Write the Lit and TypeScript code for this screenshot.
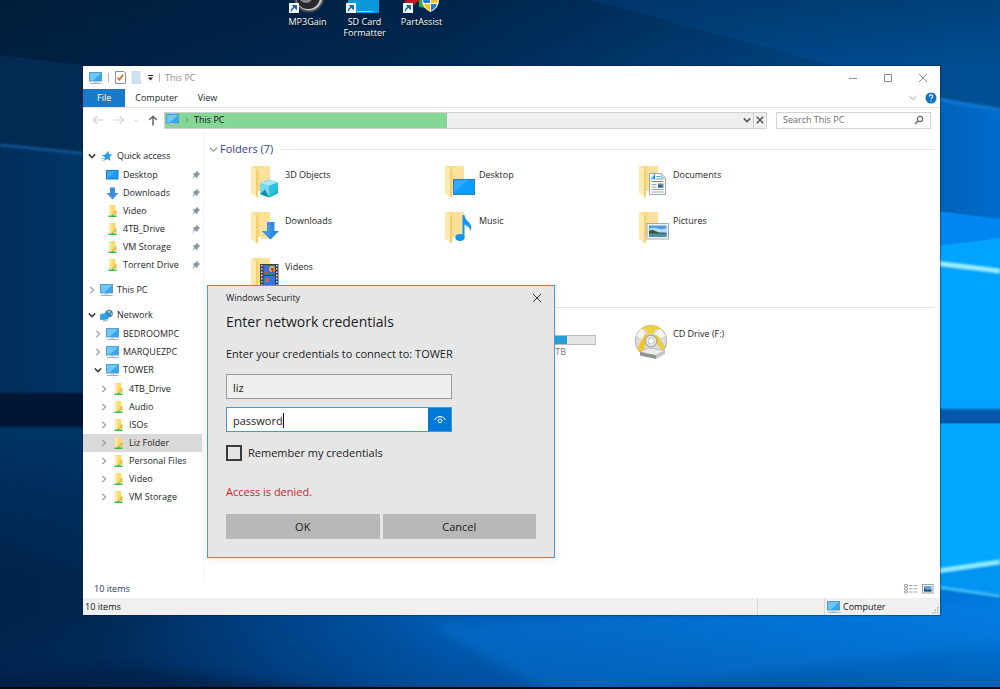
import { LitElement, html, svg, css, nothing, TemplateResult } from "lit";
import { customElement, state } from "lit/decorators.js";
import { classMap } from "lit/directives/class-map.js";
import { styleMap } from "lit/directives/style-map.js";

const base = css`
  * { box-sizing: border-box; }
  button, input {
    font: inherit;
    color: inherit;
    margin: 0;
    padding: 0;
    border: 0;
    border-radius: 0;
    background: none;
    outline: none;
  }
  a { color: inherit; text-decoration: none; }
  ul { list-style: none; margin: 0; padding: 0; }
  h1, h2, p { margin: 0; font-weight: 400; }
  svg { display: block; flex: none; }
`;

/* ---------- small glyphs ---------- */

const pc = html`<svg width="14" height="14" viewBox="0 0 14 14" aria-hidden="true">
  <rect x=".5" y="1.5" width="12" height="8.500" fill="#35a7ee" stroke="#5b9cc6" />
  <path d="M1 2h11L4 9.500H1z" fill="#6cc8fb" />
  <path d="M4.500 10.500h4v1.200h-4z" fill="#b9c6d0" />
  <path d="M1 12.500h11.500" stroke="#9fb2c0" stroke-width="1" />
</svg>`;

const star = html`<svg width="12" height="12" viewBox="0 0 12 12" aria-hidden="true">
  <path d="M7 .8 8 4.200l3.500.3-2.800 2.300.7 3.900-3.100-1.700-3.200 1.800.7-3.700L.6 5.300l3.900-.8z" fill="#2b9ae8" />
  <path d="M0 8.500h3M1 10.300h2" stroke="#7cc0f2" stroke-width=".8" />
</svg>`;

const desktopSmall = html`<svg width="13" height="12" viewBox="0 0 13 12" aria-hidden="true">
  <rect x=".5" y="1.500" width="11.500" height="8.500" fill="#1a9cf8" stroke="#1479c8" />
  <path d="M1 2h8L2 9.500H1z" fill="#38acfb" />
</svg>`;

const downSmall = html`<svg width="13" height="13" viewBox="0 0 13 13" aria-hidden="true">
  <path d="M4 .5h5V6h3.500L6.500 12.500.5 6H4z" fill="#3b8ede" />
</svg>`;

const netFolder = html`<svg width="13" height="14" viewBox="0 0 13 14" aria-hidden="true">
  <path d="M3 1h6.500v9.500H3z" fill="#fbd96b" />
  <path d="M3 1l2.500 1v9.500L3 10.500z" fill="#ffe99c" />
  <path d="M9.500 6h1v4.500H6z" fill="#e9bd45" />
  <path d="M6.500 10.500v2M2.500 12.300h8" stroke="#35bb3d" stroke-width="1.600" />
</svg>`;

const network = html`<svg width="13" height="13" viewBox="0 0 13 13" aria-hidden="true">
  <circle cx="9" cy="4.500" r="3.800" fill="#3e86a8" />
  <path d="M7 2.500q2-1.500 3.500 0l-1 2zM10 5l2-1v2.500z" fill="#9fd3dc" />
  <path d="M.5 5.500 8 4v6L.5 10.800z" fill="#2aa3ee" stroke="#2a83bd" stroke-width=".6" />
  <path d="M3 11.800h4.500" stroke="#8aa2b4" />
</svg>`;

const pin = html`<svg width="10" height="10" viewBox="0 0 10 10" aria-hidden="true">
  <path d="M5.500.8 9.200 4.300 8 4.800 6.700 6.200 6.300 8.300 4.200 6.500 1 9.200 3.300 5.600 1.500 3.700l2.200-.4L5.200 2z" fill="#8796a3" />
</svg>`;

const chevron = (dir: "right" | "down", color: string, size = 8, width = 1.2) => html`<svg
  width=${size} height=${size} viewBox="0 0 8 8" aria-hidden="true">
  <path d=${dir === "down" ? "M.8 2.400 4 5.600 7.200 2.400" : "M2.300.8 5.500 4 2.300 7.200"} fill="none"
    stroke=${color} stroke-width=${width} />
</svg>`;

const cross = (color: string, size: number, width = 1) => html`<svg
  width=${size} height=${size} viewBox="0 0 10 10" aria-hidden="true">
  <path d="M1 1 9 9M9 1 1 9" stroke=${color} stroke-width=${width} fill="none" />
</svg>`;

/* ---------- large folder icons ---------- */

const folderBody = svg`
  <path d="M7 1h17v27H9z" fill="#f8dc8c" />
  <path d="M14 1h10v27H14z" fill="#fbe19a" />
  <path d="M5 .5 12 5v27.500L5 28z" fill="#ffe9ac" />
  <path d="M10 4 12 5v27.500l-2-1.300z" fill="#f3cf72" />
  <path d="M12 26h3v4l-3 1.500z" fill="#fff" />`;

const overlays: Record<string, unknown> = {
  objects: svg`
    <path d="M14 18.500 23 14.500l9 3v11l-8.500 4L14 29z" fill="#1fb4cf" />
    <path d="M14 18.500 23 14.500l9 3-9 3.500z" fill="#a4e8f0" />
    <path d="M14 18.500 23 21v11.500L14 29z" fill="#7ad9e6" />
    <path d="M14 29 19 24.500l4 8z" fill="#0f8fa6" />
    <path d="M23 21 32 17.500v6L23 32z" fill="#2cc4dc" />`,
  desktop: svg`
    <rect x="13.500" y="14.500" width="21" height="15" fill="#0d9cff" stroke="#2b7fb6" />
    <path d="M14 15h14L14 28z" fill="#2aa9ff" />`,
  documents: svg`
    <path d="M15.500 8.500h12l4 4v17h-16z" fill="#fcfdff" stroke="#9aa7b3" />
    <path d="M27.500 8.500v4h4" fill="#dfe5ea" stroke="#9aa7b3" stroke-width=".8" />
    <path d="M17.500 14.500 20.500 10v4.500M18.500 13h2" fill="none" stroke="#2191dc" stroke-width="1.100" />
    <path d="M22.500 11.500h4M22.500 14h7M17.500 16.500h12" stroke="#3fa2df" />
    <path d="M17.500 19.500h5M17.500 22h5M17.500 24.500h12M17.500 27h12" stroke="#9aa4ad" />
    <rect x="24" y="18.500" width="5.500" height="4" fill="#5b8fb5" />
    <path d="M24 22.500v-1.500l2-1.200 3.500 2.700z" fill="#2e5f4c" />`,
  downloads: svg`<path d="M21 11h7.500v9H33L24.500 28.500 16 20h5z" fill="#2f8be0" />
    <path d="M21 11h3.500v17.500L16 20h5z" fill="#4197e6" />`,
  music: svg`
    <ellipse cx="20" cy="26.500" rx="4.600" ry="3.400" fill="#0d96f2" />
    <path d="M22.500 4h2q.5 4 4.500 7.500 3.500 3.500 1.500 9.500.2-5-6-7.500v13h-2z" fill="#0d96f2" />`,
  pictures: svg`
    <rect x="13" y="12.500" width="21.500" height="15.500" fill="#f1f4f6" stroke="#a2abb2" />
    <rect x="15" y="14.500" width="17.500" height="11.500" fill="#4f9be0" />
    <path d="M15 18q5-2 9-.5t8.500-.5v4.500H15z" fill="#b8dcf3" />
    <path d="M15 19.500 19 19l6 2.500 7.500.5v1.500H15z" fill="#34594a" />
    <path d="M15 22.500h17.500V26H15z" fill="#4f8d9f" />`,
  videos: svg`
    <rect x="14" y="7" width="18.500" height="24" fill="#3a3d44" />
    <rect x="17.500" y="8" width="11.500" height="10" fill="#3b6ed8" />
    <rect x="17.500" y="19" width="11.500" height="11" fill="#3c74dd" />
    <circle cx="26" cy="12" r="3" fill="#e8b721" />
    <path d="M24.500 11h3.500l-1.500 5z" fill="#c8312c" />
    <circle cx="20" cy="15.500" r="1.800" fill="#d94545" />
    <path d="M22 18q3-3 6 0z" fill="#3d8a3b" />
    <circle cx="21" cy="23" r="2" fill="#e2584c" />
    <path d="M15.700 8v23M30.800 8v23" stroke="#dcdfe4" stroke-width="1.500" stroke-dasharray="1.600 1.600" />`,
};

const largeFolder = (kind: string) => html`<svg width="38" height="34" viewBox="0 0 38 34" aria-hidden="true">
  ${folderBody}${overlays[kind]}
</svg>`;

const cdDrive = html`<svg width="38" height="36" viewBox="0 0 38 36" aria-hidden="true">
  <circle cx="17" cy="17" r="15.800" fill="#d9dad9" stroke="#a9a9a0" stroke-width=".8" />
  <path d="M6 6A15.400 15.400 0 0 1 28 6L17 3.500z" fill="#f6cc1c" />
  <path d="M11 3q6-2.500 12 0l-4 7h-5z" fill="#f3cf3a" />
  <path d="M2.500 12Q4 7 8 4.500L13 12l-3 4z" fill="#f2f2f0" />
  <path d="M26 5q4 3 5.500 7l-8 3-3-5z" fill="#f7f7f5" />
  <path d="M3 25 11 10l4 1-7 18q-3-1-5-4z" fill="#f1c828" />
  <path d="M20 10l4 2 7 11q-1 3-3 4l-6-9z" fill="#efca36" />
  <circle cx="17" cy="17" r="5.800" fill="#e6e6e6" stroke="#a8a8a8" stroke-width="1.200" />
  <circle cx="17" cy="17" r="3" fill="#fff" stroke="#b5b5b5" stroke-width=".8" />
  <path d="M6 28 14 24l17 2.500-9 5z" fill="#ececec" stroke="#9d9d9d" stroke-width=".5" />
  <path d="M6 28 22 31.500v3.500L6 31.500z" fill="#8f9193" />
  <path d="M22 31.500 31 26.500V30l-9 5z" fill="#c3c5c7" />
  <path d="M18 31.500h2v1.500h-2z" fill="#49c23e" />
</svg>`;

/* ---------- data ---------- */

interface TreeNode {
  label: string;
  icon: TemplateResult;
  open?: boolean;
  leaf?: boolean;
  pinned?: boolean;
  selected?: boolean;
  children?: TreeNode[];
}

const quick = (label: string, icon = netFolder): TreeNode => ({ label, icon, leaf: true, pinned: true });
const share = (label: string, selected = false): TreeNode => ({ label, icon: netFolder, selected });

const tree: TreeNode[] = [
  {
    label: "Quick access", icon: star, open: true,
    children: [
      quick("Desktop", desktopSmall), quick("Downloads", downSmall), quick("Video"),
      quick("4TB_Drive"), quick("VM Storage"), quick("Torrent Drive"),
    ],
  },
  { label: "This PC", icon: pc },
  {
    label: "Network", icon: network, open: true,
    children: [
      { label: "BEDROOMPC", icon: pc },
      { label: "MARQUEZPC", icon: pc },
      {
        label: "TOWER", icon: pc, open: true,
        children: [
          share("4TB_Drive"), share("Audio"), share("ISOs"), share("Liz Folder", true),
          share("Personal Files"), share("Video"), share("VM Storage"),
        ],
      },
    ],
  },
];

const folders: [string, string][] = [
  ["3D Objects", "objects"], ["Desktop", "desktop"], ["Documents", "documents"],
  ["Downloads", "downloads"], ["Music", "music"], ["Pictures", "pictures"],
  ["Videos", "videos"],
];

/* ---------- navigation tree ---------- */

@customElement("nav-tree")
class NavTree extends LitElement {
  static styles = [base, css`
    :host { display: block; padding-top: 15px; }
    .roots { display: flex; flex-direction: column; gap: 7px; }
    .branch { padding-top: 1px; }
    .row {
      width: 100%;
      height: 18px;
      display: flex;
      align-items: center;
      gap: 3px;
      text-align: left;
      white-space: nowrap;
    }
    .row.selected { background: #d9d9d9; }
    .d0 { padding-left: 5px; }
    .d1 { padding-left: 11px; }
    .d2 { padding-left: 17px; }
    .twist { width: 8px; flex: none; }
    .icon { width: 15px; flex: none; display: flex; justify-content: center; }
    .text { flex: 1; }
    .pin { margin-right: 1px; }
  `];

  private node(n: TreeNode, depth: number): TemplateResult {
    return html`<li>
      <button class=${classMap({ row: true, [`d${depth}`]: true, selected: !!n.selected })}>
        <span class="twist">${n.leaf ? nothing : chevron(n.open ? "down" : "right", n.open ? "#404040" : "#9a9a9a", 8, n.open ? 1.5 : 1.2)}</span>
        <span class="icon">${n.icon}</span>
        <span class="text">${n.label}</span>
        ${n.pinned ? html`<span class="pin">${pin}</span>` : nothing}
      </button>
      ${n.children ? html`<ul class="branch">${n.children.map((c) => this.node(c, depth + 1))}</ul>` : nothing}
    </li>`;
  }

  render() {
    return html`<ul class="roots">${tree.map((n) => this.node(n, 0))}</ul>`;
  }
}

/* ---------- explorer window ---------- */

@customElement("explorer-window")
class ExplorerWindow extends LitElement {
  @state() private progress = 47;
  @state() private driveUsed = 76;

  static styles = [base, css`
    :host {
      display: flex;
      flex-direction: column;
      background: #fff;
      color: #1e1e1e;
      font: 9px/12px "Open Sans", "Noto Sans", sans-serif;
    }
    .titlebar { display: flex; align-items: center; height: 23px; padding-left: 6px; flex: none; }
    .quick { display: flex; align-items: center; gap: 5px; flex: 1; color: #8f8f8f; }
    .bar { width: 1px; height: 9px; background: #b5b5b5; }
    .ctl { width: 35px; height: 22px; display: grid; place-items: center; }
    .menu {
      display: flex;
      align-items: stretch;
      height: 19px;
      flex: none;
      border-bottom: 1px solid #e2e3e4;
    }
    .menu a { padding: 0 10px; line-height: 18px; }
    .menu a.file { background: #1979ca; color: #fff; padding: 0 14px; }
    .menu .spacer { flex: 1; }
    .menu button { display: grid; place-items: center; padding: 0 4px; }
    .menu .help { padding: 0 3px 0 4px; }
    .navbar { display: flex; align-items: center; height: 24px; padding: 0 9px; flex: none; }
    .arrows { display: flex; align-items: center; width: 72px; gap: 9px; }
    .address {
      flex: 1;
      height: 17px;
      display: flex;
      align-items: center;
      position: relative;
      border: 1px solid #cfcfcf;
      background: #efefef;
      color: #111;
    }
    .fill { position: absolute; left: 0; top: 0; bottom: 0; background: #84d794; }
    .crumbs { position: relative; flex: 1; display: flex; align-items: center; gap: 4px; padding-left: 1px; }
    .address button { position: relative; height: 15px; width: 13px; display: grid; place-items: center; }
    .address .stop { border-left: 1px solid #cfcfcf; }
    .search {
      width: 155px;
      height: 17px;
      margin-left: 9px;
      display: flex;
      align-items: center;
      border: 1px solid #d4d4d4;
      padding: 0 6px;
    }
    .search input { flex: 1; min-width: 0; }
    .search input::placeholder { color: #6d6d6d; opacity: 1; }
    .search button { display: block; }
    .body { flex: 1; min-height: 0; display: flex; }
    nav-tree { width: 119px; flex: none; }
    .pane { flex: 1; min-width: 0; padding: 7px 5px 0 5px; border-left: 1px solid #f4f4f4; margin-left: 1px; }
    .group { display: flex; align-items: center; gap: 2px; height: 20px; color: #2f3f92; }
    .group h2 { font-size: 11px; line-height: 16px; }
    .rule { flex: 1; height: 1px; background: #e4e4e4; margin-left: 4px; }
    .grid {
      display: grid;
      grid-template-columns: repeat(auto-fill, 194px);
      grid-auto-rows: 46px;
      padding: 6px 0 0 37px;
    }
    .tile { display: flex; align-items: flex-start; gap: 1px; text-align: left; }
    .tile .name { padding-top: 4px; }
    .devices .rule { margin-left: 0; }
    .devices .grid { padding-top: 16px; }
    .drive { padding: 11px 0 0 39px; }
    .meter { width: 117px; height: 10px; border: 1px solid #bcbcbc; background: #e6e6e6; display: block; }
    .used { display: block; height: 100%; background: #26a0da; }
    .free { display: block; width: 87px; text-align: right; color: #7a7a7a; padding-top: 1px; }
    .devices { padding-top: 4px; }
    .summary { height: 18px; display: flex; align-items: center; padding: 0 6px 0 11px; color: #1e395b; flex: none; }
    .summary .views { margin-left: auto; display: flex; gap: 5px; }
    .status { height: 17px; display: flex; align-items: stretch; background: #f0f0f0; color: #111; line-height: 17px; flex: none; }
    .status .count { flex: 1; padding-left: 2px; }
    .status .cell { width: 67px; border-left: 1px solid #d9d9d9; }
    .status .zone { width: 116px; display: flex; align-items: center; gap: 2px; padding-left: 2px; }
    .zone .where { flex: 1; }
    .zone .grip { align-self: flex-end; }
  `];

  render() {
    return html`
      <div class="titlebar">
        <div class="quick">
          ${pc}<span class="bar"></span>
          <svg width="12" height="13" viewBox="0 0 12 13"><path d="M1.500.5h8.500l1.500 1.500v10.500h-10z" fill="#fff" stroke="#8e8e8e"/><path d="M3.500 6.500 5.500 9l3.500-5.500" fill="none" stroke="#e2632c" stroke-width="1.600"/></svg>
          <svg width="11" height="13" viewBox="0 0 11 13"><path d="M1 .5h8v10h1v2H1z" fill="#d3e0f2" stroke="#c0cfe6" stroke-width=".6"/></svg>
          <svg width="7" height="8" viewBox="0 0 7 8"><path d="M1 1.500h5" stroke="#222"/><path d="M1 3.500h5L3.500 6.500z" fill="#222"/></svg>
          <span class="bar"></span>
          <span>This PC</span>
        </div>
        <button class="ctl" aria-label="Minimize"><svg width="10" height="10" viewBox="0 0 10 10"><path d="M1 5.500h8" stroke="#8a8a8a"/></svg></button>
        <button class="ctl" aria-label="Maximize"><svg width="10" height="10" viewBox="0 0 10 10"><path d="M1.500 1.500h7v7h-7z" fill="none" stroke="#8a8a8a"/></svg></button>
        <button class="ctl" aria-label="Close">${cross("#8a8a8a", 10)}</button>
      </div>
      <div class="menu">
        <a class="file" href="#file">File</a>
        <a href="#computer">Computer</a>
        <a href="#view">View</a>
        <span class="spacer"></span>
        <button aria-label="Expand the ribbon">${chevron("down", "#9a9a9a", 8, 1)}</button>
        <button class="help" aria-label="Help">
          <svg width="12" height="12" viewBox="0 0 12 12"><circle cx="6" cy="6" r="5.500" fill="#0f70c8"/><path d="M4.200 4.600q0-1.700 1.800-1.700t1.800 1.500q0 .9-1 1.400-.8.500-.8 1.300M6 8.400v1.200" fill="none" stroke="#fff" stroke-width="1.100"/></svg>
        </button>
      </div>
      <div class="navbar">
        <div class="arrows">
          <button aria-label="Back"><svg width="12" height="10" viewBox="0 0 12 10"><path d="M11 5H1.500M5 1.500 1.500 5 5 8.500" fill="none" stroke="#cfcfcf" stroke-width="1.100"/></svg></button>
          <button aria-label="Forward"><svg width="12" height="10" viewBox="0 0 12 10"><path d="M1 5h9.500M7 1.500 10.500 5 7 8.500" fill="none" stroke="#cfcfcf" stroke-width="1.100"/></svg></button>
          <button aria-label="Recent locations">${chevron("down", "#cfcfcf", 5, 1.5)}</button>
          <button aria-label="Up"><svg width="10" height="11" viewBox="0 0 10 11"><path d="M5 10.500V1.500M1.200 5 5 1.300 8.800 5" fill="none" stroke="#666" stroke-width="1.500"/></svg></button>
        </div>
        <div class="address">
          <span class="fill" style=${styleMap({ width: `${this.progress}%` })}></span>
          <span class="crumbs">${pc}${chevron("right", "#5f7f66", 6)}<span>This PC</span></span>
          <button aria-label="Previous locations">${chevron("down", "#555", 8, 1.6)}</button>
          <button class="stop" aria-label="Stop loading">${cross("#555", 8, 1.9)}</button>
        </div>
        <div class="search">
          <input type="text" placeholder="Search This PC" aria-label="Search This PC" />
          <button aria-label="Search"><svg width="10" height="10" viewBox="0 0 10 10"><circle cx="6" cy="4" r="2.600" fill="none" stroke="#666" stroke-width="1.200"/><path d="M4.200 5.800 1 9" stroke="#666" stroke-width="1.500"/></svg></button>
        </div>
      </div>
      <div class="body">
        <nav-tree></nav-tree>
        <div class="pane">
          <div class="group">${chevron("down", "#8a8a8a", 9, 1)}<h2>Folders (7)</h2><span class="rule"></span></div>
          <div class="grid">
            ${folders.map(([name, kind]) => html`<button class="tile">${largeFolder(kind)}<span class="name">${name}</span></button>`)}
          </div>
          <div class="devices">
            <div class="rule"></div>
            <div class="grid">
              <span></span>
              <div class="drive">
                <span class="meter"><span class="used" style=${styleMap({ width: `${this.driveUsed}%` })}></span></span>
                <span class="free">TB</span>
              </div>
              <button class="tile">${cdDrive}<span class="name">CD Drive (F:)</span></button>
            </div>
          </div>
        </div>
      </div>
      <div class="summary">
        <span>10 items</span>
        <span class="views">
          <button aria-label="Details"><svg width="13" height="10" viewBox="0 0 13 10"><path d="M.5.5h3v2h-3zM.5 3.800h3v2h-3zM.5 7h3v2h-3z" fill="none" stroke="#9a8f94" stroke-width=".8"/><path d="M5 1.500h3.500M9.500 1.500H13M5 4.800h3.500M9.500 4.800H13M5 8h3.500M9.500 8H13" stroke="#a2a2a2"/></svg></button>
          <button aria-label="Large icons"><svg width="12" height="10" viewBox="0 0 12 10"><rect x=".5" y=".5" width="10.500" height="8.500" fill="#fff" stroke="#9aa3ab"/><rect x="2" y="2" width="7.500" height="5.500" fill="#5aa7e0"/><path d="M2 7.500V4.500l3 1.500 4.500-.5v2z" fill="#27465c"/></svg></button>
        </span>
      </div>
      <div class="status">
        <span class="count">10 items</span>
        <span class="cell"></span>
        <span class="cell zone">${pc}<span class="where">Computer</span>
          <svg class="grip" width="8" height="8" viewBox="0 0 8 8"><path d="M5 0h1.500v1.500H5zM2.500 2.500H4V4H2.500zM5 2.500h1.500V4H5zM0 5h1.500v1.500H0zM2.500 5H4v1.500H2.500zM5 5h1.500v1.500H5z" fill="#b4b4b4"/></svg>
        </span>
      </div>
    `;
  }
}

/* ---------- credentials dialog ---------- */

@customElement("credentials-dialog")
class CredentialsDialog extends LitElement {
  @state() private user = "liz";
  @state() private password = "password";

  static styles = [base, css`
    :host {
      display: block;
      background: #e6e6e6;
      border: 1px solid #4a9bdc;
      color: #1c1c1c;
      font: 11px/16px "Open Sans", "Noto Sans", sans-serif;
    }
    .head { display: flex; align-items: center; justify-content: space-between; height: 24px; padding: 0 11px 0 18px; }
    .head span { font-size: 9px; }
    .head button { display: grid; place-items: center; width: 12px; height: 12px; }
    form { padding: 0 18px 18px; }
    h1 { font-size: 14px; line-height: 24px; }
    .message { padding-top: 12px; }
    .field { width: 226px; height: 25px; display: flex; margin-top: 8px; position: relative; }
    .field input { flex: 1; min-width: 0; padding: 2px 6px 0; }
    .user { border: 1px solid #999; background: #efefef; margin-top: 12px; }
    .secret { border: 1px solid #3f98e0; background: #fff; }
    .secret input { caret-color: transparent; }
    .reveal { width: 23px; background: #0078d7; display: grid; place-items: center; }
    .caret { position: absolute; left: 56px; top: 5px; width: 1px; height: 15px; background: #111; }
    .remember { display: flex; align-items: center; gap: 6px; margin-top: 13px; height: 16px; }
    .remember input { appearance: none; width: 16px; height: 16px; border: 2px solid #3a3a3a; }
    .error { color: #d0222a; padding-top: 23px; }
    .actions { display: grid; grid-template-columns: 1fr 1fr; gap: 3px; padding-top: 14px; }
    .actions button { height: 25px; background: #b8b8b8; }
  `];

  render() {
    return html`
      <div class="head"><span>Windows Security</span><button aria-label="Close">${cross("#333", 10)}</button></div>
      <form @submit=${(e: Event) => e.preventDefault()}>
        <h1>Enter network credentials</h1>
        <p class="message">Enter your credentials to connect to: TOWER</p>
        <div class="field user"><input type="text" aria-label="User name" .value=${this.user} /></div>
        <div class="field secret">
          <input type="text" aria-label="Password" .value=${this.password} />
          <span class="caret"></span>
          <button type="button" class="reveal" aria-label="Reveal password">
            <svg width="14" height="12" viewBox="0 0 14 12"><path d="M1.500 6Q3 2.500 7 2.500T12.500 6" fill="none" stroke="#fff" stroke-width="1"/><circle cx="7" cy="6.800" r="1.900" fill="none" stroke="#fff" stroke-width="1"/></svg>
          </button>
        </div>
        <div class="remember">
          <input type="checkbox" id="remember" /><label for="remember">Remember my credentials</label>
        </div>
        <p class="error">Access is denied.</p>
        <div class="actions"><button type="submit">OK</button><button type="button">Cancel</button></div>
      </form>
    `;
  }
}

/* ---------- desktop ---------- */

const shortcut = svg`<rect x="0" y="3" width="10" height="10" fill="#f4f7fa" />
  <path d="M2 11.500q0-4 4-4.500M3.500 5.500h4v4z" fill="#1f62a8" stroke="#1f62a8" stroke-width="1" />`;

const shortcuts: [string, unknown][] = [
  ["MP3Gain", svg`
    <circle cx="20" cy="-3" r="15.500" fill="#46494d" />
    <circle cx="20" cy="-3" r="13.500" fill="#c4c5c6" />
    <circle cx="19" cy="-3" r="12" fill="#26282b" />
    <circle cx="17" cy="-4" r="7" fill="#85888c" />`],
  ["SD Card Formatter", svg`
    <path d="M2 0h31v13H2z" fill="#0a98dd" />
    <path d="M11 11.500h16" stroke="#d7ecf8" stroke-width=".7" />`],
  ["PartAssist", svg`
    <path d="M2 0h15l-6 5H2z" fill="#c01722" />
    <path d="M16 0h6v8l-6-1z" fill="#2ca84e" />
    <path d="M19 0h17q0 8-8.500 12Q19 8 19 0z" fill="#fff" />
    <path d="M20 0h7v3h-6q-1-1-1-3z" fill="#1f7bd0" />
    <path d="M28 0h7q0 2-1 3h-6z" fill="#f8c120" />
    <path d="M21 4h6v7q-5-3-6-7z" fill="#f8c120" />
    <path d="M28 4h6q-1 4-6 7z" fill="#1f7bd0" />`],
];

@customElement("app-root")
class AppRoot extends LitElement {
  static styles = [base, css`
    :host {
      display: block;
      position: relative;
      height: 100vh;
      overflow: hidden;
      background: #00254c;
      font: 9px/11px "Open Sans", "Noto Sans", sans-serif;
    }
    .wallpaper { position: absolute; inset: 0; width: 100%; height: 100%; }
    .shortcuts { position: relative; display: flex; padding-left: 279px; color: #fff; }
    .shortcut { width: 57px; display: flex; flex-direction: column; align-items: center; gap: 2px; text-align: center; text-shadow: 0 1px 2px #000; }
    .shortcut span { width: 48px; }
    explorer-window { position: absolute; left: 83px; right: 60px; top: 66px; bottom: 74px; box-shadow: 0 0 1px 1px rgba(0, 20, 50, 0.35); }
    credentials-dialog { position: absolute; left: 207px; top: 285px; width: 348px; box-shadow: 0 2px 8px rgba(0, 0, 0, 0.08); }
  `];

  render() {
    return html`
      <svg class="wallpaper" viewBox="0 0 1000 689" preserveAspectRatio="none" aria-hidden="true">
        <defs>
          <linearGradient id="top"><stop offset="0" stop-color="#001f3f"/><stop offset=".45" stop-color="#002a54"/><stop offset=".75" stop-color="#003e78"/><stop offset="1" stop-color="#004a8a"/></linearGradient>
          <linearGradient id="mid"><stop offset="0" stop-color="#002e5a"/><stop offset=".1" stop-color="#003869"/><stop offset=".6" stop-color="#0068bc"/><stop offset=".94" stop-color="#0062ba"/><stop offset="1" stop-color="#006cce"/></linearGradient>
          <linearGradient id="low"><stop offset="0" stop-color="#00234a"/><stop offset=".1" stop-color="#002852"/><stop offset=".25" stop-color="#003f80"/><stop offset=".45" stop-color="#005cb4"/><stop offset=".7" stop-color="#0068c6"/><stop offset="1" stop-color="#0078dc"/></linearGradient>
          <linearGradient id="shade" x1="0" y1="0" x2="0" y2="1"><stop offset="0" stop-color="#001028" stop-opacity=".22"/><stop offset="1" stop-color="#001028" stop-opacity="0"/></linearGradient>
          <linearGradient id="glow" x1="0" y1="0" x2="0" y2="1"><stop offset="0" stop-color="#00386e" stop-opacity=".8"/><stop offset="1" stop-color="#00386e" stop-opacity="0"/></linearGradient>
          <linearGradient id="floor" x1="0" y1="0" x2="0" y2="1"><stop offset="0" stop-color="#003c80" stop-opacity="0"/><stop offset="1" stop-color="#002a5c" stop-opacity=".3"/></linearGradient>
          <filter id="soft" x="-5%" y="-30%" width="110%" height="160%"><feGaussianBlur stdDeviation="1.200"/></filter>
          <filter id="haze" x="-10%" y="-30%" width="120%" height="160%"><feGaussianBlur stdDeviation="6"/></filter>
        </defs>
        <rect width="1000" height="689" fill="url(#top)"/>
        <path d="M0 55 90 66H1000V500H0z" fill="#0a4a8c" opacity=".25"/>
        <path d="M590 0H1000V110z" fill="#0060b0" opacity=".25"/>
        <rect width="1000" height="66" fill="url(#shade)"/>
        <path d="M0 145 90 154 930 98 1000 110V420H0z" fill="url(#mid)"/>
        <path d="M0 145 90 154" stroke="#0a5292" stroke-width="3" filter="url(#soft)"/>
        <path d="M930 98 1000 110" stroke="#0a74d0" stroke-width="4" filter="url(#soft)"/>
        <path d="M930 210 1000 219V420H930z" fill="#0086f0"/>
        <path d="M930 247 1000 238V415H930z" fill="#00a4ff"/>
        <rect y="427" width="1000" height="262" fill="url(#low)"/>
        <rect y="427" width="90" height="150" fill="url(#glow)"/>
        <rect x="-10" y="393" width="510" height="34" fill="#001534" filter="url(#soft)"/>
        <path d="M930 423H1000V563L930 572z" fill="#00a8ff"/>
        <rect x="920" y="409" width="90" height="14" fill="#0058ac" filter="url(#soft)"/>
        <path d="M930 572 1000 563V594L930 586z" fill="#0094f2"/>
        <rect y="615" width="1000" height="74" fill="url(#floor)"/>
        <path d="M-20 676 140 668 420 700H-20z" fill="#001c40" opacity=".6" filter="url(#haze)"/>
        <path d="M430 625 1020 600V640L560 700z" fill="#0a84ec" opacity=".3" filter="url(#haze)"/>
        <g filter="url(#soft)">
          <path d="M930 262.500 1000 271" stroke="#9cecff" stroke-width="5"/>
          <path d="M930 572 1000 562" stroke="#8ce8ff" stroke-width="5"/>
          <path d="M930 586 1000 596" stroke="#3fc0ff" stroke-width="3"/>
        </g>
        <rect y="687" width="1000" height="2" fill="#05080c"/>
      </svg>
      <div class="shortcuts">
        ${shortcuts.map(([name, art]) => html`<a class="shortcut" href="#open">
          <svg width="38" height="14" viewBox="0 0 38 14" aria-hidden="true">${art}${shortcut}</svg>
          <span>${name}</span>
        </a>`)}
      </div>
      <explorer-window></explorer-window>
      <credentials-dialog></credentials-dialog>
    `;
  }
}
